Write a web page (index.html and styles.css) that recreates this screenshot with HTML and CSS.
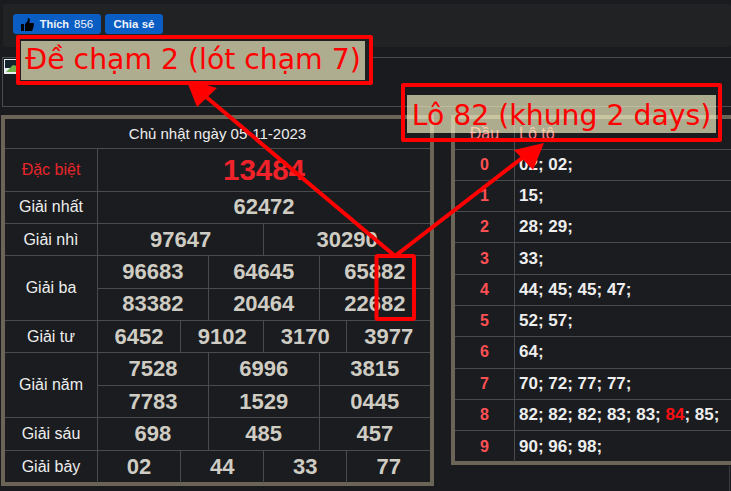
FILE: index.html
```html
<!DOCTYPE html>
<html lang="vi">
<head>
<meta charset="utf-8">
<title>Kết quả</title>
<link rel="stylesheet" href="styles.css">
</head>
<body>
<header class="topbar">
  <a class="fb-btn like">
    <svg class="thumb" viewBox="0 0 13 13" width="13" height="13"><path fill="#000" d="M0 6h3v7H0zM4 6.200 6.800 2.600V0c1.300 0 2 1 2 2.200L8.400 5H12c.8 0 1.200.8 1 1.500l-1.300 5.300c-.2.700-.7 1.200-1.400 1.200H4z"/></svg>
    <b>Thích</b> <span class="count">856</span>
  </a>
  <a class="fb-btn share"><b>Chia sẻ</b></a>
</header>
<section class="ad">
  <svg class="broken" viewBox="0 0 14 15" width="14" height="15"><path fill="#e9eef2" d="M0 0h14v15H0z"/><path fill="#16242e" d="M1 1h12v8H1z"/><path fill="#6fae4a" d="M2 13 9 6l4 1v6z"/><path fill="#16242e" d="M5 1h4L7 4z"/></svg>
</section>
<main class="tables">
  <div class="frame frame-kq">
    <table class="kq">
      <colgroup>
        <col class="c-label">
        <col span="12">
      </colgroup>
      <tr class="r-date"><th colspan="13">Chủ nhật ngày 05-11-2023</th></tr>
      <tr class="r-db"><td class="lb red">Đặc biệt</td><td colspan="12" class="db">13484</td></tr>
      <tr><td class="lb">Giải nhất</td><td colspan="12">62472</td></tr>
      <tr><td class="lb">Giải nhì</td><td colspan="6">97647</td><td colspan="6">30290</td></tr>
      <tr><td class="lb" rowspan="2">Giải ba</td><td colspan="4">96683</td><td colspan="4">64645</td><td colspan="4">65882</td></tr>
      <tr><td colspan="4">83382</td><td colspan="4">20464</td><td colspan="4">22682</td></tr>
      <tr><td class="lb">Giải tư</td><td colspan="3">6452</td><td colspan="3">9102</td><td colspan="3">3170</td><td colspan="3">3977</td></tr>
      <tr><td class="lb" rowspan="2">Giải năm</td><td colspan="4">7528</td><td colspan="4">6996</td><td colspan="4">3815</td></tr>
      <tr><td colspan="4">7783</td><td colspan="4">1529</td><td colspan="4">0445</td></tr>
      <tr><td class="lb">Giải sáu</td><td colspan="4">698</td><td colspan="4">485</td><td colspan="4">457</td></tr>
      <tr><td class="lb">Giải bảy</td><td colspan="3">02</td><td colspan="3">44</td><td colspan="3">33</td><td colspan="3">77</td></tr>
    </table>
  </div>
  <div class="frame frame-loto">
    <table class="loto">
      <colgroup>
        <col class="c-dau">
        <col>
      </colgroup>
      <tr class="lhead"><th class="dau">Đầu</th><th>Lô tô</th></tr>
      <tr><td class="dau">0</td><td>02; 02;</td></tr>
      <tr><td class="dau">1</td><td>15;</td></tr>
      <tr><td class="dau">2</td><td>28; 29;</td></tr>
      <tr><td class="dau">3</td><td>33;</td></tr>
      <tr><td class="dau">4</td><td>44; 45; 45; 47;</td></tr>
      <tr><td class="dau">5</td><td>52; 57;</td></tr>
      <tr><td class="dau">6</td><td>64;</td></tr>
      <tr><td class="dau">7</td><td>70; 72; 77; 77;</td></tr>
      <tr><td class="dau">8</td><td>82; 82; 82; 83; 83; <span class="hot">84</span>; 85;</td></tr>
      <tr><td class="dau">9</td><td>90; 96; 98;</td></tr>
    </table>
  </div>
</main>
<div class="edge"></div>
<svg class="arrows" viewBox="0 0 731 491" width="731" height="491">
  <g stroke="#fe0000" fill="none">
    <path stroke-width="4" d="M395 256 205 96"/>
    <path stroke-width="4" d="M395 256 526 155"/>
    <rect x="376.500" y="256" width="37.500" height="63" rx="1" stroke-width="4"/>
  </g>
  <path fill="#fe0000" d="M186 79 217 88 197 107z"/>
  <path fill="#fe0000" d="M544 143 514 150 533 170z"/>
</svg>
<div class="note note-a"><span>Đề chạm 2 (lót chạm 7)</span></div>
<div class="note note-b"><span>Lô 82 (khung 2 days)</span></div>
</body>
</html>
```
FILE: styles.css
```css
* { box-sizing: border-box; }
html, body { margin: 0; height: 491px; overflow: hidden; }
body {
  background: #191b1e;
  font-family: "Liberation Sans", Arial, sans-serif;
  color: #e8e8e8;
  position: relative;
}
.topbar {
  margin: 4px 0 0 3px;
  height: 43px;
  background: #212224;
  border-radius: 3px;
  padding: 10px 0 0 10px;
  display: flex;
  gap: 4px;
  align-items: flex-start;
}
.fb-btn {
  height: 20px;
  background: #0a5dc2;
  border-radius: 3px;
  color: #eef3fa;
  font-size: 11.500px;
  display: flex;
  align-items: center;
  justify-content: center;
  white-space: nowrap;
  padding: 0;
}
.like { width: 88px; }
.like b { margin: 0 5px 0 6px; font-size: 11px; }
.share { width: 58px; }
.count { font-weight: 400; }
.ad {
  margin: 10px 0 0 2px;
  height: 50px;
  border: 1px solid #4a4b4d;
  border-right: 0;
  padding: 1px 0 0 1px;
}
.broken { display: block; }
.tables {
  display: flex;
  align-items: flex-start;
  margin: 8px 0 0 1px;
  gap: 17px;
}
.frame { border: 4px solid #6b6558; flex: none; background: #1a1c1f; }
.frame-kq { width: 433px; height: 371px; }
.frame-loto { width: 290px; height: 350px; }
table {
  border-collapse: collapse;
  border-style: hidden;
  table-layout: fixed;
  width: 100%;
}
td, th { border: 1px solid #4a4b4d; padding: 0; }
.c-label { width: 92.500px; }
.c-dau { width: 59.500px; }
.kq td {
  height: 32.400px;
  text-align: center;
  font-size: 22px;
  font-weight: 700;
  color: #cfccc4;
}
.kq td.lb { font-size: 16px; font-weight: 400; color: #eee; }
.kq td.red { color: #e8252a; }
.kq td.db { font-size: 29.500px; color: #f0222a; }
.kq .r-db td { height: 43px; }
.r-date th { height: 29px; font-size: 15px; font-weight: 400; color: #eee; }
.loto td {
  height: 31.300px;
  font-size: 17px;
  font-weight: 700;
  color: #eee;
  padding-left: 4px;
}
.loto td.dau {
  padding-left: 0;
  text-align: center;
  font-size: 16px;
  color: #ff5054;
}
.lhead th {
  height: 30px;
  font-size: 16px;
  font-weight: 400;
  color: #ff7d80;
  text-align: left;
  padding-left: 4px;
}
.lhead th.dau { text-align: center; padding-left: 0; }
.hot { color: #fa0f14; }
.edge {
  position: absolute;
  left: 729px;
  top: 466px;
  width: 1px;
  height: 25px;
  background: #3a3b3d;
}
.arrows { position: absolute; left: 0; top: 0; }
.note {
  position: absolute;
  border: 4px solid #fe0000;
  border-radius: 2px;
  color: #fe0000;
  font-family: "DejaVu Sans", sans-serif;
  white-space: nowrap;
}
.note span {
  display: block;
  background: rgba(250, 248, 200, .66);
  height: 100%;
  text-align: center;
}
.note-a { left: 16px; top: 35px; width: 357px; height: 50px; padding: 2px 4px 1px 1px; font-size: 28.300px; line-height: 38px; background: #1e1f21; }
.note-b { left: 401px; top: 83px; width: 321px; height: 59px; padding: 8px 2px 5px 2px; font-size: 28.300px; line-height: 41px; }
```
